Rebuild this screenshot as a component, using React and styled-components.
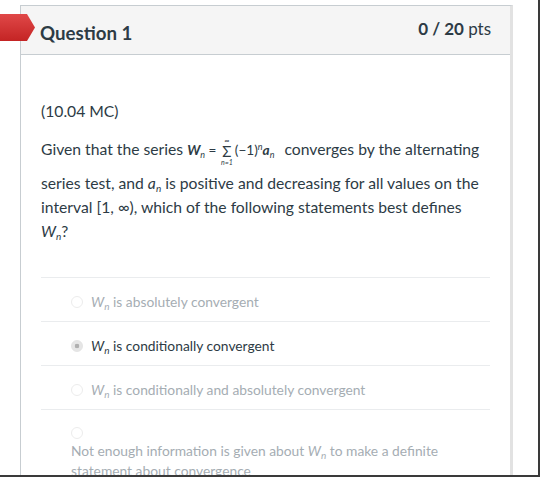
import React from 'react';
import styled, { createGlobalStyle } from 'styled-components';

const GlobalStyle = createGlobalStyle`
  html, body {
    margin: 0;
    padding: 0;
    background: #fff;
  }
  body {
    font-family: Lato, "Open Sans", sans-serif;
    color: #2d3b45;
  }
`;

const Frame = styled.div`
  width: 538px;
  height: 470px;
  border-right: 2px solid #3a3a3a;
  border-bottom: 2px solid #3a3a3a;
  overflow: hidden;
  padding-top: 5px;
`;

const Card = styled.section`
  position: relative;
  margin-left: 20px;
  width: 493px;
  height: 100%;
  border: 1px solid #c7cdd1;
  border-right: 3px solid #e2e2e2;
  border-bottom: none;
  box-sizing: border-box;
`;

const Header = styled.header`
  height: 48px;
  display: flex;
  align-items: center;
  justify-content: space-between;
  padding: 0 19px 0 19px;
  background-color: #f5f5f5;
  border-bottom: 1px solid #c7cdd1;
`;

const Flag = styled.div`
  position: absolute;
  left: -21px;
  top: 8px;
  width: 35px;
  height: 27px;
  background: linear-gradient(#e04848, #c42424);
  clip-path: polygon(0 0, 27px 0, 35px 50%, 27px 100%, 0 100%);
`;

const Title = styled.h2`
  margin: 6px 0 0;
  font-size: 18.7px;
  font-weight: 700;
  color: #2d3b45;
`;

const Points = styled.div`
  font-size: 17px;
  font-weight: 700;
  color: #2d3b45;
  margin: 0 0 4px 0;

  span {
    font-weight: 400;
  }
`;

const Body = styled.div`
  padding: 46px 20px 0 20px;
`;

const Tag = styled.p`
  margin: 0 0 16px;
  font-size: 15.7px;
  line-height: 20px;
`;

const Prompt = styled.p`
  margin: 0;
  font-size: 15.7px;
  line-height: 24px;
`;

const Bold = styled.i`
  font-weight: 700;
`;

const Sub = styled.i`
  font-size: ${props => props.size || 10}px;
  line-height: 0;
  vertical-align: ${props => (props.up ? '5px' : '-3px')};
`;

const Formula = styled.span`
  display: inline-block;
  font-size: 13.6px;
  padding-bottom: 5px;
  margin-right: 10px;
`;

const Sum = styled.span`
  display: inline-flex;
  flex-direction: column;
  align-items: center;
  vertical-align: middle;
  line-height: 1;
  font-size: 15px;
  margin: 0 2px 0 1px;

  small {
    font-size: 7px;
    font-style: italic;
  }
`;

const Answers = styled.div`
  margin-top: 34px;
  border-top: 1px solid #eaecee;
`;

const Answer = styled.label`
  display: flex;
  flex-direction: ${props => (props.stacked ? 'column' : 'row')};
  align-items: ${props => (props.stacked ? 'flex-start' : 'center')};
  gap: ${props => (props.stacked ? '2px' : '8px')};
  padding: ${props => (props.stacked ? '17px 0 0 30px' : '15px 0 11px 30px')};
  border-bottom: ${props => (props.last ? 'none' : '1px solid #eaecee')};
  font-size: 13.8px;
  line-height: ${props => (props.stacked ? '20px' : '17px')};
  color: ${props => (props.selected ? '#2d3b45' : '#a5adb3')};
`;

const Radio = styled.span`
  width: 12px;
  height: 12px;
  flex: none;
  border-radius: 50%;
  box-sizing: border-box;
  border: 1px solid ${props => (props.checked ? '#e4e4e4' : '#ececec')};
  background: ${props => (props.checked ? 'radial-gradient(circle, #b0b0b0 0 2px, #e6e6e6 2.6px)' : '#fff')};
`;

function Wn() {
  return (
    <>
      <i>W</i><Sub>n</Sub>
    </>
  );
}

const answers = [
  { text: ' is absolutely convergent' },
  { text: ' is conditionally convergent', selected: true },
  { text: ' is conditionally and absolutely convergent' },
];

export default function App() {
  return (
    <>
      <GlobalStyle />
      <Frame>
        <Card>
          <Flag />
          <Header>
            <Title>Question 1</Title>
            <Points>0 / 20 <span>pts</span></Points>
          </Header>
          <Body>
            <Tag>(10.04 MC)</Tag>
            <Prompt>
              Given that the series{' '}
              <Formula>
                <Bold>W</Bold><Sub size={9}>n</Sub> ={' '}
                <Sum>
                  <small>∞</small>
                  Σ
                  <small>n=1</small>
                </Sum>
                (−1)<Sub size={9} up>n</Sub><Bold>a</Bold><Sub size={9}>n</Sub>
              </Formula>
              converges by the alternating series test, and <i>a</i><Sub>n</Sub> is positive and decreasing
              for all values on the interval [1, ∞), which of the following statements best defines <Wn />?
            </Prompt>
            <Answers>
              {answers.map(a => (
                <Answer key={a.text} selected={a.selected}>
                  <Radio checked={a.selected} />
                  <span><Wn />{a.text}</span>
                </Answer>
              ))}
              <Answer stacked last>
                <Radio />
                <span>
                  Not enough information is given about <Wn /> to make a definite statement about convergence
                </span>
              </Answer>
            </Answers>
          </Body>
        </Card>
      </Frame>
    </>
  );
}
